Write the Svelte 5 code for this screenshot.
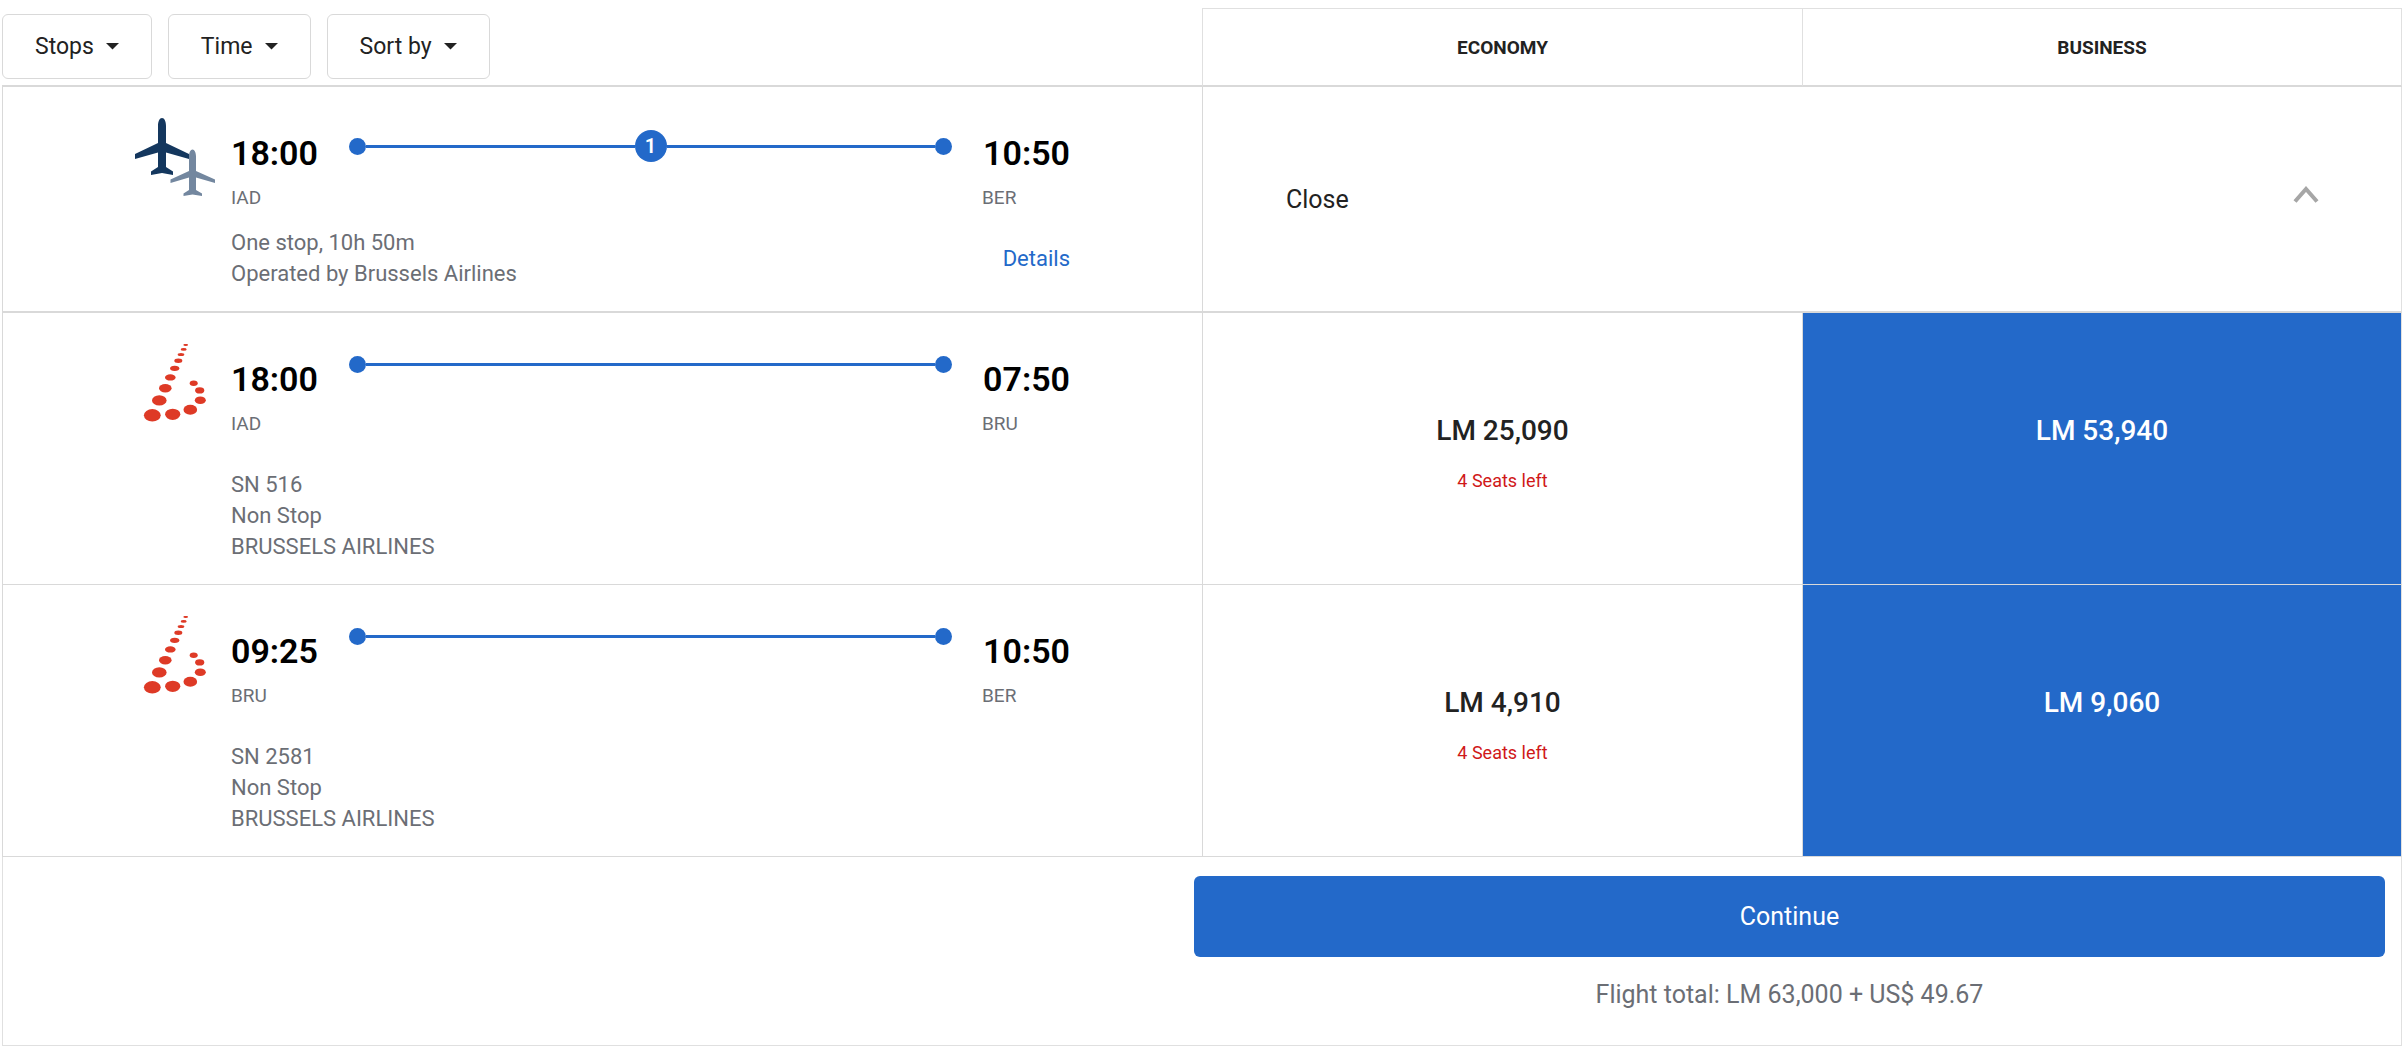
<script>
	const filters = ["Stops", "Time", "Sort by"];

	const legs = [
		{
			from: "IAD",
			to: "BRU",
			departs: "18:00",
			arrives: "07:50",
			notes: ["SN 516", "Non Stop", "BRUSSELS AIRLINES"],
			economy: "LM 25,090",
			business: "LM 53,940",
			seats: "4 Seats left"
		},
		{
			from: "BRU",
			to: "BER",
			departs: "09:25",
			arrives: "10:50",
			notes: ["SN 2581", "Non Stop", "BRUSSELS AIRLINES"],
			economy: "LM 4,910",
			business: "LM 9,060",
			seats: "4 Seats left"
		}
	];

	// cx, cy, rx, ry
	const dots = [
		[50.7, 0.9, 2.3, 1],
		[48.7, 5.4, 3, 1.3],
		[46, 10.4, 3.3, 1.5],
		[43.3, 16.7, 4, 2.2],
		[39.7, 24.3, 4.6, 2.6],
		[35.3, 33.4, 5.3, 3.2],
		[30.3, 44.3, 6.3, 4.2],
		[24.3, 56.4, 7.3, 5.2],
		[17.3, 71.3, 8.4, 6.2],
		[37.7, 70.3, 7.6, 5.6],
		[55.3, 65.7, 6.8, 5],
		[65.3, 56.3, 5.5, 3.8],
		[64.7, 46.4, 4.6, 3.1],
		[58.7, 39.3, 4, 2.7]
	];

	let cabins = $state(["business", "business"]);
</script>

{#snippet stop(time, code, end)}
	<div class="stop" class:end>
		<div class="time">{time}</div>
		<div class="code">{code}</div>
	</div>
{/snippet}

<main>
	<table>
		<thead>
			<tr>
				<td class="filters">
					<div class="filter-list">
						{#each filters as filter}
							<button class="filter">
								{filter}
								<svg width="13" height="7" viewBox="0 0 13 7"><path d="M0 0h13L6.500 6.500z" fill="#222" /></svg>
							</button>
						{/each}
					</div>
				</td>
				<th scope="col">ECONOMY</th>
				<th scope="col">BUSINESS</th>
			</tr>
		</thead>
		<tbody>
			<tr class="summary">
				<td class="flight">
					<div class="leg">
						<svg class="logo" viewBox="0 0 80 80">
							<path fill="#14375e" d="M27 0c2.400 0 4 3.500 4 8v17l23 11v5l-23-6.500V49l7 4.500V57l-11-2-11 2v-3.500l7-4.500V34.500L0 41v-5l23-11V8c0-4.500 1.600-8 4-8z" />
							<path fill="#73879f" d="M57.500 31.500c2 0 3.500 3 3.500 7V53l19 8.500V65l-19-5.500V72l6 3.500V78l-9.500-1.500L48.500 78v-2.500l5.500-3.500V59.500L35.500 65v-3.500L54 53V38.500c0-4 1.500-7 3.500-7z" />
						</svg>
						{@render stop("18:00", "IAD", false)}
						<div class="track">
							<i class="dot"></i><i class="line"></i><span class="badge">1</span><i class="line"></i><i class="dot"></i>
						</div>
						{@render stop("10:50", "BER", true)}
					</div>
					<div class="notes">
						<p>One stop, 10h 50m<br />Operated by Brussels Airlines</p>
						<a href="#details">Details</a>
					</div>
				</td>
				<td class="toggle" colspan="2">
					<button class="close">
						Close
						<svg width="26" height="26" viewBox="0 0 26 26"><path d="M2 15.500L13 3l11 12.500" fill="none" stroke="#a6a6a6" stroke-width="4" /></svg>
					</button>
				</td>
			</tr>
			{#each legs as leg, i}
				<tr>
					<td class="flight">
						<div class="leg">
							<svg class="logo" viewBox="0 0 80 80">
								{#each dots as [cx, cy, rx, ry]}
									<ellipse {cx} {cy} {rx} {ry} fill="#de3a26" />
								{/each}
							</svg>
							{@render stop(leg.departs, leg.from, false)}
							<div class="track">
								<i class="dot"></i><i class="line"></i><i class="dot"></i>
							</div>
							{@render stop(leg.arrives, leg.to, true)}
						</div>
						<div class="notes">
							<p>
								{#each leg.notes as note}{note}<br />{/each}
							</p>
						</div>
					</td>
					<td class="fare" class:selected={cabins[i] === "economy"}>
						<button onclick={() => (cabins[i] = "economy")}>
							<span class="price">{leg.economy}</span>
							<span class="seats">{leg.seats}</span>
						</button>
					</td>
					<td class="fare" class:selected={cabins[i] === "business"}>
						<button onclick={() => (cabins[i] = "business")}>
							<span class="price">{leg.business}</span>
						</button>
					</td>
				</tr>
			{/each}
		</tbody>
	</table>
	<footer>
		<div class="checkout">
			<button class="continue">Continue</button>
			<p>Flight total: LM 63,000 + US$ 49.67</p>
		</div>
	</footer>
</main>

<style>
	:global(body) {
		margin: 0;
		background: #fff;
	}
	main {
		padding: 8px 2px 2px;
		font-family: Roboto, "Liberation Sans", sans-serif;
		font-size: 22px;
		line-height: 31px;
		color: #222;
	}
	button {
		font: inherit;
		color: inherit;
		border: 0;
		padding: 0;
		background: none;
		cursor: pointer;
	}
	p {
		margin: 0;
	}
	table {
		width: 100%;
		table-layout: fixed;
		border-collapse: separate;
		border-spacing: 0;
	}
	td, th {
		box-sizing: border-box;
		padding: 0;
		border-left: 1px solid #d9d9d9;
		border-bottom: 1px solid #d9d9d9;
	}
	td:last-child, th:last-child {
		border-right: 1px solid #e0e0e0;
	}

	/* header row */
	th {
		width: 25%;
		border-top: 1px solid #e0e0e0;
		border-left-color: #e0e0e0;
		border-bottom-width: 2px;
		font-size: 19px;
		font-weight: 700;
	}
	.filters {
		border-left: 0;
		border-bottom-width: 2px;
	}
	.filter-list {
		display: flex;
		gap: 16px;
		padding: 6px 0;
	}
	.filter {
		display: flex;
		align-items: center;
		gap: 12px;
		height: 65px;
		padding: 0 32px;
		border: 1px solid #d9d9d9;
		border-radius: 6px;
		font-size: 23px;
	}

	/* flights */
	.summary td {
		border-bottom-width: 2px;
	}
	.flight {
		padding: 31px 132px 22px;
		vertical-align: top;
	}
	.leg {
		display: flex;
		align-items: flex-start;
	}
	.logo {
		width: 80px;
		height: 80px;
		margin-right: 16px;
		flex: none;
	}
	.stop {
		flex: none;
		width: 88px;
		padding-top: 15px;
	}
	.time {
		font-size: 34px;
		line-height: 40px;
		font-weight: 600;
		color: #000;
	}
	.end .time {
		text-align: right;
	}
	.code {
		margin-top: 13px;
		font-size: 19px;
		line-height: 24px;
		color: #6b6e75;
	}
	.track {
		display: flex;
		flex: 1;
		align-items: center;
		height: 32px;
		margin: 4px 30px 0;
	}
	.summary .track {
		margin-top: 12px;
	}
	.dot {
		width: 17px;
		height: 17px;
		border-radius: 50%;
		background: #2369c9;
	}
	.line {
		flex: 1;
		height: 3px;
		background: #2369c9;
	}
	.badge {
		width: 32px;
		height: 32px;
		border-radius: 50%;
		background: #2369c9;
		color: #fff;
		font-size: 20px;
		line-height: 32px;
		font-weight: 600;
		text-align: center;
	}
	.notes {
		display: flex;
		justify-content: space-between;
		align-items: center;
		margin-top: 33px;
		padding-left: 96px;
		color: #6b6e75;
	}
	.summary .notes {
		margin-top: 17px;
	}
	a {
		color: #2369c9;
		text-decoration: none;
	}

	/* fares */
	.close {
		display: flex;
		justify-content: space-between;
		align-items: center;
		width: 100%;
		padding: 0 82px 0 83px;
		font-size: 25px;
	}
	.fare {
		vertical-align: top;
	}
	.fare button {
		display: flex;
		flex-direction: column;
		align-items: center;
		gap: 20px;
		width: 100%;
		padding: 100px 0 90px;
	}
	.price {
		font-size: 28px;
		line-height: 36px;
		font-weight: 500;
	}
	.seats {
		font-size: 18px;
		line-height: 24px;
		color: #d01818;
	}
	.selected {
		background: #2369c9;
		color: #fff;
	}

	footer {
		display: flex;
		justify-content: flex-end;
		padding: 19px 16px 34px;
		border: 1px solid #e0e0e0;
		border-top: 0;
	}
	.checkout {
		width: calc(50% + 8px);
		text-align: center;
		font-size: 25px;
		line-height: 32px;
		color: #6b6e75;
	}
	.continue {
		display: block;
		width: 100%;
		height: 81px;
		margin-bottom: 22px;
		border-radius: 6px;
		background: #2369c9;
		color: #fff;
	}
</style>
